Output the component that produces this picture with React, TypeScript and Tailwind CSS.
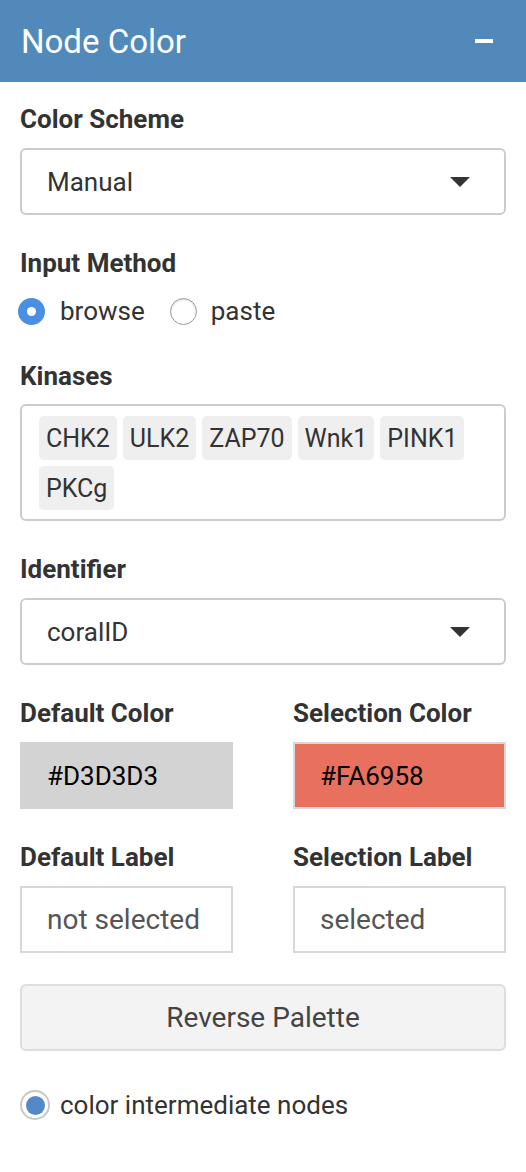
const Caret = () => (
  <svg width="20" height="10" viewBox="0 0 20 10" className="shrink-0">
    <path d="M0 0 H20 L10 10 Z" fill="#333" />
  </svg>
);

const Label = ({ children, className = "" }: { children: React.ReactNode; className?: string }) => (
  <div className={`h-[26px] flex items-center text-[26px] font-bold text-[#333] leading-none ${className}`}>{children}</div>
);

const kinases = ["CHK2", "ULK2", "ZAP70", "Wnk1", "PINK1", "PKCg"];

export default function App() {
  return (
    <div className="w-[526px] min-h-[1172px] bg-white" style={{ fontFamily: "Roboto, 'Liberation Sans', sans-serif" }}>
      <div className="h-[82px] bg-[#5289bb] flex items-center justify-between pl-[21px] pr-[33px]">
        <span className="text-white text-[33px] leading-none">Node Color</span>
        <span className="block w-[18px] h-[4px] bg-white" />
      </div>

      <div className="px-[20px]">
        <Label className="mt-[24px]">Color Scheme</Label>
        <div className="mt-[16px] h-[67px] border-2 border-[#ccc] rounded-[6px] flex items-center justify-between pl-[25px] pr-[34px]">
          <span className="text-[26px] leading-none text-[#333]">Manual</span>
          <Caret />
        </div>

        <Label className="mt-[35px]">Input Method</Label>
        <div className="mt-[21px] h-[28px] flex items-center">
          <span className="w-[27px] h-[27px] -ml-[2px] rounded-full bg-[#4a90e2] flex items-center justify-center">
            <span className="w-[9px] h-[9px] rounded-full bg-white" />
          </span>
          <span className="ml-[15px] text-[26px] leading-none text-[#333]">browse</span>
          <span className="ml-[25px] w-[27px] h-[27px] rounded-full border border-[#999] bg-white shadow-[inset_0_1px_2px_rgba(0,0,0,0.15)]" />
          <span className="ml-[14px] text-[26px] leading-none text-[#333]">paste</span>
        </div>

        <Label className="mt-[38px]">Kinases</Label>
        <div className="mt-[15px] border-2 border-[#ccc] rounded-[6px] pl-[17px] pr-[10px] pt-[10px] pb-[9px] flex flex-wrap gap-[6px]">
          {kinases.map((k) => (
            <span key={k} className="h-[44px] px-[7px] flex items-center bg-[#efefef] rounded-[5px] text-[25px] leading-none text-[#333]">
              {k}
            </span>
          ))}
        </div>

        <Label className="mt-[35px]">Identifier</Label>
        <div className="mt-[16px] h-[67px] border-2 border-[#ccc] rounded-[6px] flex items-center justify-between pl-[25px] pr-[34px]">
          <span className="text-[26px] leading-none text-[#333]">coralID</span>
          <Caret />
        </div>

        <div className="mt-[35px] grid grid-cols-2 gap-x-[60px]">
          <div>
            <Label>Default Color</Label>
            <div className="mt-[16px] h-[67px] bg-[#d3d3d3] border-2 border-[#d3d3d3] flex items-center pl-[25px] text-[26px] leading-none text-black">
              #D3D3D3
            </div>
          </div>
          <div>
            <Label>Selection Color</Label>
            <div className="mt-[16px] h-[67px] bg-[#e8705f] border-2 border-[#d5d8dc] flex items-center pl-[25px] text-[26px] leading-none text-black">
              #FA6958
            </div>
          </div>
        </div>

        <div className="mt-[35px] grid grid-cols-2 gap-x-[60px]">
          <div>
            <Label>Default Label</Label>
            <div className="mt-[16px] h-[67px] border-2 border-[#d5d8dc] flex items-center pl-[25px] text-[28px] leading-none text-[#555]">
              not selected
            </div>
          </div>
          <div>
            <Label>Selection Label</Label>
            <div className="mt-[16px] h-[67px] border-2 border-[#d5d8dc] flex items-center pl-[25px] text-[28px] leading-none text-[#555]">
              selected
            </div>
          </div>
        </div>

        <button className="mt-[31px] w-full h-[67px] bg-[#f3f3f3] border-2 border-[#ddd] rounded-[6px] text-[28px] leading-none text-[#444]">
          Reverse Palette
        </button>

        <div className="mt-[39px] h-[30px] flex items-center">
          <span className="w-[30px] h-[30px] rounded-full border-2 border-[#c8c8c8] bg-white flex items-center justify-center">
            <span className="w-[19px] h-[19px] rounded-full bg-[#5389c9]" />
          </span>
          <span className="ml-[10px] text-[26px] leading-none text-[#333]">color intermediate nodes</span>
        </div>
      </div>
    </div>
  );
}
